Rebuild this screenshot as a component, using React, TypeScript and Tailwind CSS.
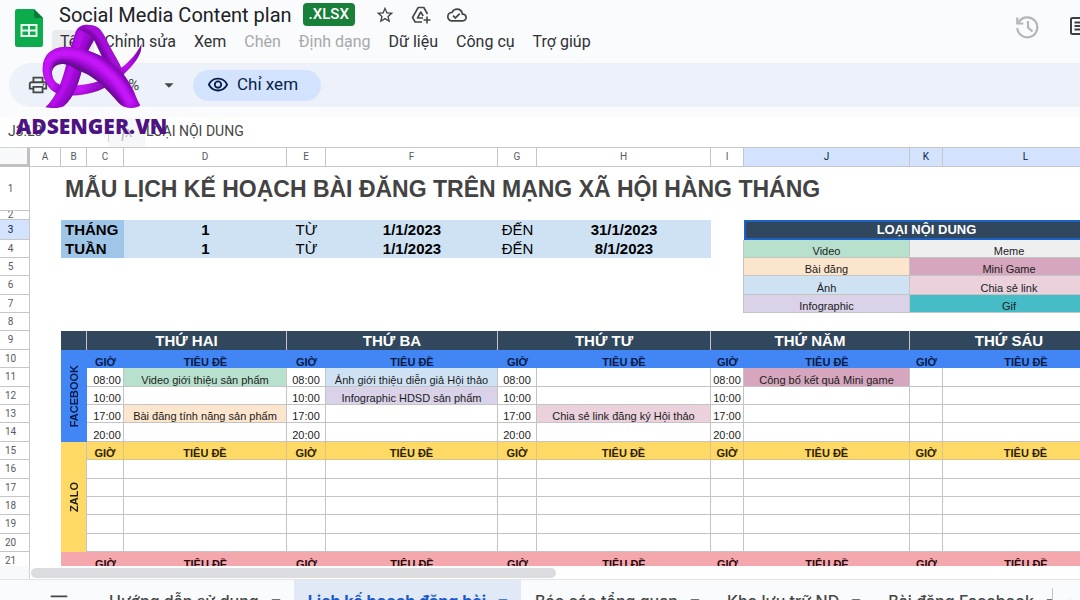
import React from "react";
import {
  MdArrowDropDown,
  MdChevronLeft,
  MdMenu,
  MdOutlineCloudDone,
  MdOutlinePrint,
  MdOutlineVisibility,
  MdStarBorder,
} from "react-icons/md";

const menus = [
  { label: "Tệp", open: true },
  { label: "Chỉnh sửa" },
  { label: "Xem" },
  { label: "Chèn", disabled: true },
  { label: "Định dạng", disabled: true },
  { label: "Dữ liệu" },
  { label: "Công cụ" },
  { label: "Trợ giúp" },
];

const columns = [
  { name: "A", width: "w-[31px]" },
  { name: "B", width: "w-[26px]" },
  { name: "C", width: "w-[37px]" },
  { name: "D", width: "w-[163px]" },
  { name: "E", width: "w-[39px]" },
  { name: "F", width: "w-[172px]" },
  { name: "G", width: "w-[39px]" },
  { name: "H", width: "w-[174px]" },
  { name: "I", width: "w-[33px]" },
  { name: "J", width: "w-[166px]", selected: true },
  { name: "K", width: "w-[33px]", selected: true },
  { name: "L", width: "w-[166px]", selected: true },
];

const days = ["THỨ HAI", "THỨ BA", "THỨ TƯ", "THỨ NĂM", "THỨ SÁU"];

type Post = { text: string; color: string };

const slots: { row: number; height: string; time: string; posts: (Post | null)[] }[] = [
  {
    row: 11,
    height: "h-[19px]",
    time: "08:00",
    posts: [
      { text: "Video giới thiệu sản phẩm", color: "bg-[#b7e1cd]" },
      { text: "Ảnh giới thiệu diễn giả Hội thảo", color: "bg-[#cfe2f3]" },
      null,
      { text: "Công bố kết quả Mini game", color: "bg-[#d5a6bd]" },
      null,
    ],
  },
  {
    row: 12,
    height: "h-[18px]",
    time: "10:00",
    posts: [null, { text: "Infographic HDSD sản phẩm", color: "bg-[#d9d2e9]" }, null, null, null],
  },
  {
    row: 13,
    height: "h-[18px]",
    time: "17:00",
    posts: [
      { text: "Bài đăng tính năng sản phẩm", color: "bg-[#fce5cd]" },
      null,
      { text: "Chia sẻ link đăng ký Hội thảo", color: "bg-[#ead1dc]" },
      null,
      null,
    ],
  },
  { row: 14, height: "h-[19px]", time: "20:00", posts: [null, null, null, null, null] },
];

const emptyRows = [
  { row: 16, height: "h-[19px]" },
  { row: 17, height: "h-[18px]" },
  { row: 18, height: "h-[18px]" },
  { row: 19, height: "h-[19px]" },
  { row: 20, height: "h-[18px]" },
];

const legend = [
  { row: 4, height: "h-[18px]", left: "Video", leftBg: "bg-[#b7e1cd]", right: "Meme", rightBg: "bg-[#efefef]" },
  { row: 5, height: "h-[18px]", left: "Bài đăng", leftBg: "bg-[#fce5cd]", right: "Mini Game", rightBg: "bg-[#d5a6bd]" },
  { row: 6, height: "h-[19px]", left: "Ảnh", leftBg: "bg-[#cfe2f3]", right: "Chia sẻ link", rightBg: "bg-[#ead1dc]" },
  { row: 7, height: "h-[18px]", left: "Infographic", leftBg: "bg-[#d9d2e9]", right: "Gif", rightBg: "bg-[#46bdc6]" },
];

const tabs = [
  { label: "Hướng dẫn sử dụng" },
  { label: "Lịch kế hoạch đăng bài", active: true },
  { label: "Báo cáo tổng quan" },
  { label: "Kho lưu trữ ND" },
  { label: "Bài đăng Facebook" },
];

const cell = "border-r border-b border-[#c4c4c4] p-0 text-center align-bottom";

function RowHead({ n, height, selected }: { n: number; height: string; selected?: boolean }) {
  return (
    <th
      scope="row"
      className={`${height} overflow-hidden border-r border-b border-[#c4c7c5] p-0 pr-2 text-center align-middle font-[Roboto,sans-serif] text-[10px] leading-[8px] font-normal ${
        selected ? "bg-[#d3e3fd] text-[#041e49]" : "bg-white text-[#575b5f]"
      }`}
    >
      {n}
    </th>
  );
}

function TitleCells({ tone }: { tone: string }) {
  return (
    <>
      {days.map((day) => (
        <React.Fragment key={day}>
          <td className={`p-0 text-center align-bottom font-bold ${tone}`}>GIỜ</td>
          <td className={`p-0 text-center align-bottom font-bold ${tone}`}>TIÊU ĐỀ</td>
        </React.Fragment>
      ))}
    </>
  );
}

function LegendCells({ item }: { item: (typeof legend)[number] }) {
  return (
    <>
      <td className={`${cell} ${item.leftBg}`}>{item.left}</td>
      <td colSpan={2} className={`${cell} ${item.rightBg}`}>
        {item.right}
      </td>
    </>
  );
}

function PlatformLabel({ children }: { children: string }) {
  return (
    <div className="flex justify-center">
      <span className="rotate-180 [writing-mode:vertical-rl]">{children}</span>
    </div>
  );
}

function SheetsLogo() {
  return (
    <svg viewBox="0 0 28 38" className="h-[38px] w-7 shrink-0" aria-label="Trang tính">
      <path d="M2.5 0H19l9 9v26.500a2.500 2.500 0 0 1-2.500 2.500h-23A2.500 2.500 0 0 1 0 35.500v-33A2.500 2.500 0 0 1 2.500 0Z" fill="#0cab4b" />
      <path d="M19 0l9 9h-6.500A2.500 2.500 0 0 1 19 6.500Z" fill="#087a36" />
      <path d="M5.500 15h17v13h-17Z M7.500 17v3.500h5.500V17Z M15 17v3.500h5.500V17Z M7.500 22.500V26h5.500v-3.500Z M15 22.500V26h5.500v-3.500Z" fill="#e8f7ee" fillRule="evenodd" />
    </svg>
  );
}

const tailShape =
  "M30 175C48 196 78 200 112 196C150 194 178 190 200 176C232 158 252 148 270 132C292 112 306 94 316 72C318 98 306 122 262 164C236 188 206 206 172 217C136 228 96 230 66 220C46 212 34 196 30 175Z";
const legShape =
  "M28 262C62 230 80 180 92 128C102 92 110 62 118 38C124 20 138 13 156 14C176 18 184 40 174 60C162 82 152 98 142 134C130 182 116 230 84 258C72 266 46 265 28 262Z";
const armShape =
  "M124 28C138 12 170 10 188 24C202 38 212 60 224 84C240 114 254 132 264 166L220 160C204 122 188 88 173 58C164 46 148 34 124 28Z";
const bandShape =
  "M66 222C34 210 18 172 20 142C22 106 44 82 88 80C134 80 186 98 226 126C260 152 282 188 296 220C302 236 308 248 313 256C302 266 272 268 256 256C232 232 212 206 190 188C166 168 144 156 124 150C108 140 96 133 82 132C60 130 46 144 48 162C50 182 62 192 80 197Z";

function Watermark() {
  return (
    <div className="pointer-events-none absolute top-5 left-4 flex flex-col items-start">
      <svg viewBox="0 0 336 276" className="ml-5 h-[92px] w-[112px]" aria-hidden="true">
        <defs>
          <filter id="soft" x="-20%" y="-20%" width="140%" height="140%">
            <feGaussianBlur stdDeviation="6" />
          </filter>
          <clipPath id="clipTail"><path d={tailShape} /></clipPath>
          <clipPath id="clipLeg"><path d={legShape} /></clipPath>
          <clipPath id="clipArm"><path d={armShape} /></clipPath>
          <clipPath id="clipBand"><path d={bandShape} /></clipPath>
          <linearGradient id="tail" gradientUnits="userSpaceOnUse" x1="30" y1="210" x2="316" y2="80">
            <stop offset="0" stopColor="#a80bdc" />
            <stop offset="0.3" stopColor="#c814fa" />
            <stop offset="0.6" stopColor="#7d09ad" />
            <stop offset="0.8" stopColor="#c40df5" />
            <stop offset="1" stopColor="#8209b5" />
          </linearGradient>
        </defs>
        <path d={tailShape} fill="url(#tail)" />
        <g clipPath="url(#clipTail)">
          <path d="M60 230C120 242 200 218 262 172C292 146 312 122 320 78" fill="none" stroke="#6a0894" strokeWidth="8" filter="url(#soft)" />
        </g>
        <path d={legShape} fill="#9a0ad0" />
        <g clipPath="url(#clipLeg)">
          <path d="M92 262C128 230 142 176 150 134C158 100 168 80 176 56" fill="none" stroke="#5c0786" strokeWidth="20" filter="url(#soft)" />
          <path d="M44 256C82 218 100 166 112 120C120 88 128 58 138 34" fill="none" stroke="#bd10f0" strokeWidth="20" filter="url(#soft)" />
        </g>
        <path d={armShape} fill="#8e0ac2" />
        <g clipPath="url(#clipArm)">
          <path d="M140 34C160 40 174 62 186 88C200 114 216 138 228 164" fill="none" stroke="#5f0788" strokeWidth="14" filter="url(#soft)" />
          <path d="M150 18C182 20 196 48 212 80C228 110 246 136 254 164" fill="none" stroke="#ad0be0" strokeWidth="18" filter="url(#soft)" />
        </g>
        <path d={bandShape} fill="#9c0bd2" />
        <g clipPath="url(#clipBand)">
          <path d="M50 166C42 140 60 126 92 134C144 148 196 188 254 260" fill="none" stroke="#57077e" strokeWidth="20" filter="url(#soft)" />
          <path d="M56 206C26 176 26 128 48 110C82 86 148 104 192 138C240 172 268 216 288 258" fill="none" stroke="#c814fa" strokeWidth="26" filter="url(#soft)" />
          <path d="M150 84C214 104 266 152 300 216" fill="none" stroke="#6e0998" strokeWidth="12" filter="url(#soft)" />
        </g>
      </svg>
      <span className="mt-px font-['Open_Sans',sans-serif] text-[21px] leading-[26px] font-extrabold text-[#4d1383]">ADSENGER.VN</span>
    </div>
  );
}

export default function App() {
  return (
    <div className="relative h-screen overflow-hidden bg-[#f9fbfd] font-[Roboto,sans-serif] text-[#202124]">
      <div className="flex h-[calc(100%+21px)] flex-col">
        <header className="flex h-[63px] shrink-0 items-start justify-between pl-[15px]">
          <div className="flex items-start gap-2 pt-[9px]">
            <SheetsLogo />
            <div className="-mt-2 flex flex-col">
              <div className="flex h-[27px] items-center pl-2">
                <h1 className="text-[20px] leading-6 font-normal whitespace-nowrap">Social Media Content plan</h1>
                <span className="ml-[11px] rounded bg-[#188038] px-[6px] text-[15px] leading-[23px] font-medium text-white">.XLSX</span>
                <div className="ml-5 flex gap-4 text-[20px] text-[#444746]">
                  <button aria-label="Gắn dấu sao"><MdStarBorder /></button>
                  <button aria-label="Thêm vào Drive">
                    <svg viewBox="0 0 20 20" className="size-5" fill="none" stroke="currentColor" strokeWidth="1.600">
                      <path d="M11 17H4.200L1.500 12.500 7.200 2.500h5.600l3.700 6.500" strokeLinejoin="round" />
                      <path d="M12 13H6.500L9.800 7l2.400 4" strokeLinejoin="round" />
                      <path d="M16 11.500v7M12.500 15h7" />
                    </svg>
                  </button>
                  <button aria-label="Trạng thái tài liệu"><MdOutlineCloudDone /></button>
                </div>
              </div>
              <nav className="flex gap-0.5 pt-0.5 pl-px">
                {menus.map((m) => (
                  <button
                    key={m.label}
                    disabled={m.disabled}
                    className={`h-6 rounded px-2 text-[16px] leading-6 whitespace-nowrap ${m.open ? "bg-[#e9ebee]" : ""} ${
                      m.disabled ? "text-[#a6a8ab]" : "text-[#303134]"
                    }`}
                  >
                    {m.label}
                  </button>
                ))}
              </nav>
            </div>
          </div>
          <div className="flex shrink-0 gap-[30px] overflow-hidden pt-[14px]">
            <button aria-label="Nhật ký phiên bản">
              <svg viewBox="0 0 26 26" className="size-[26px]" fill="none" stroke="#b4b6b8" strokeWidth="2.200">
                <path d="M4.500 8.500A10 10 0 1 1 3.300 14" />
                <path d="M3.300 3.500v6h6M14 7v6.500l4.500 4" />
              </svg>
            </button>
            <button aria-label="Nhận xét" className="-mr-3">
              <svg viewBox="0 0 22 26" className="h-[26px] w-[22px]" fill="none" stroke="#3c4043" strokeWidth="2">
                <rect x="1" y="4" width="20" height="16" rx="1.500" />
                <path d="M4.500 8.500h13M4.500 12h13M4.500 15.500h13" />
              </svg>
            </button>
          </div>
        </header>

        <div className="ml-[9px] flex h-11 shrink-0 items-center rounded-l-full bg-[#edf2fa] pl-[18px]">
          <button aria-label="In" className="text-[22px] text-[#444746]"><MdOutlinePrint /></button>
          <button className="ml-[54px] flex w-[77px] items-center justify-between text-[15px] text-[#444746]">
            100% <MdArrowDropDown className="text-[22px]" />
          </button>
          <button className="ml-[13px] flex h-[31px] items-center gap-2 rounded-full bg-[#d3e3fd] pr-[23px] pl-[14px] text-[17px] text-[#041e49]">
            <MdOutlineVisibility className="text-[22px]" />
            Chỉ xem
          </button>
        </div>

        <div className="mt-2.5 flex h-[30px] shrink-0 items-center bg-white text-[14px] text-[#444746]">
          <input aria-label="Hộp tên" defaultValue="J3:L3" className="h-7 w-[84px] bg-transparent pb-0.5 pl-2" />
          <MdArrowDropDown className="text-[18px]" />
          <span className="ml-[6px] h-5 w-px bg-[#d0d3d6]" />
          <label htmlFor="formula" className="flex h-full w-9 items-center justify-center bg-[#f6f7f8] font-['Liberation_Serif',serif] text-[16px] text-[#b4b6b8] italic">
            fx
          </label>
          <input id="formula" defaultValue="LOẠI NỘI DUNG" className="h-7 min-w-0 flex-1 bg-transparent pb-0.5 pl-px" />
        </div>

        <main className="min-h-0 flex-1 overflow-hidden bg-white">
          <table className="w-full table-fixed border-separate border-spacing-0 font-['Liberation_Sans',Arial,sans-serif] text-[11px] leading-3 whitespace-nowrap text-[#1c1c1c]">
            <colgroup>
              <col className="w-[30px]" />
              {columns.map((c) => (
                <col key={c.name} className={c.width} />
              ))}
            </colgroup>
            <thead>
              <tr>
                <th className="h-5 border-t border-r-3 border-b-3 border-t-[#d0d3d6] border-r-[#c0c0c0] border-b-[#c0c0c0] bg-[#f8f9fa] p-0" />
                {columns.map((c) => (
                  <th
                    key={c.name}
                    scope="col"
                    className={`h-5 border-t border-r border-b border-[#c4c7c5] p-0 text-center align-middle font-[Roboto,sans-serif] text-[10px] font-normal ${
                      c.selected ? "bg-[#d3e3fd] text-[#041e49]" : "bg-white text-[#575b5f]"
                    }`}
                  >
                    {c.name}
                  </th>
                ))}
              </tr>
            </thead>
            <tbody>
              <tr>
                <RowHead n={1} height="h-11" />
                <td />
                <td colSpan={11} className="p-0 pl-1 text-left align-middle text-[23px] leading-7 font-bold text-[#434343]">
                  MẪU LỊCH KẾ HOẠCH BÀI ĐĂNG TRÊN MẠNG XÃ HỘI HÀNG THÁNG
                </td>
              </tr>
              <tr>
                <RowHead n={2} height="h-[9px]" />
                <td colSpan={12} className="p-0" />
              </tr>
              <tr className="text-[15px] leading-[18px] text-black">
                <RowHead n={3} height="h-5" selected />
                <td />
                <td colSpan={2} className="bg-[#9fc5e8] p-0 pl-1 text-left font-bold">THÁNG</td>
                <td className="bg-[#cfe2f3] p-0 text-center font-bold">1</td>
                <td className="bg-[#cfe2f3] p-0 text-center">TỪ</td>
                <td className="bg-[#cfe2f3] p-0 text-center font-bold">1/1/2023</td>
                <td className="bg-[#cfe2f3] p-0 text-center">ĐẾN</td>
                <td className="bg-[#cfe2f3] p-0 text-center font-bold">31/1/2023</td>
                <td />
                <td colSpan={3} className="border-2 border-[#1a62c9] bg-[#30475e] p-0 text-center text-[13px] leading-4 font-bold text-white">
                  LOẠI NỘI DUNG
                </td>
              </tr>
              {legend.map((item, i) => (
                <tr key={item.row}>
                  <RowHead n={item.row} height={item.height} />
                  <td className="p-0" />
                  {i === 0 ? (
                    <>
                      <td colSpan={2} className="bg-[#9fc5e8] p-0 pl-1 text-left text-[15px] leading-[18px] font-bold text-black">TUẦN</td>
                      <td className="bg-[#cfe2f3] p-0 text-center text-[15px] leading-[18px] font-bold text-black">1</td>
                      <td className="bg-[#cfe2f3] p-0 text-center text-[15px] leading-[18px] text-black">TỪ</td>
                      <td className="bg-[#cfe2f3] p-0 text-center text-[15px] leading-[18px] font-bold text-black">1/1/2023</td>
                      <td className="bg-[#cfe2f3] p-0 text-center text-[15px] leading-[18px] text-black">ĐẾN</td>
                      <td className="bg-[#cfe2f3] p-0 text-center text-[15px] leading-[18px] font-bold text-black">8/1/2023</td>
                      <td className="border-r border-[#c4c4c4] p-0" />
                    </>
                  ) : (
                    <td colSpan={8} className="border-r border-[#c4c4c4] p-0" />
                  )}
                  <LegendCells item={item} />
                </tr>
              ))}
              <tr>
                <RowHead n={8} height="h-[18px]" />
                <td colSpan={12} className="p-0" />
              </tr>
              <tr className="text-[15px] leading-[18px] text-white">
                <RowHead n={9} height="h-[19px]" />
                <td className="p-0" />
                <td className="border-r border-[#c4c4c4] bg-[#30475e] p-0" />
                {days.map((day) => (
                  <th key={day} colSpan={2} className="border-r border-[#c4c4c4] bg-[#30475e] p-0 text-center font-bold">
                    {day}
                  </th>
                ))}
              </tr>
              <tr>
                <RowHead n={10} height="h-[18px]" />
                <td className="p-0" />
                <td rowSpan={5} className="bg-[#4285f4] p-0 font-bold text-[#061b45]">
                  <PlatformLabel>FACEBOOK</PlatformLabel>
                </td>
                <TitleCells tone="bg-[#4285f4] text-[#061b45]" />
              </tr>
              {slots.map((s) => (
                <tr key={s.row}>
                  <RowHead n={s.row} height={s.height} />
                  <td className="p-0" />
                  {s.posts.map((p, d) => (
                    <React.Fragment key={d}>
                      <td className={d === 0 ? `${cell} pl-1` : cell}>{d < 4 ? s.time : ""}</td>
                      <td className={`${cell} ${p ? p.color : ""}`}>{p?.text}</td>
                    </React.Fragment>
                  ))}
                </tr>
              ))}
              <tr>
                <RowHead n={15} height="h-[18px]" />
                <td className="p-0" />
                <td rowSpan={6} className="border-r border-[#c4c4c4] bg-[#ffd966] p-0 font-bold">
                  <PlatformLabel>ZALO</PlatformLabel>
                </td>
                <TitleCells tone="bg-[#ffd966] text-[#2b2200] border-r border-b border-[#d9c48a]" />
              </tr>
              {emptyRows.map((r) => (
                <tr key={r.row}>
                  <RowHead n={r.row} height={r.height} />
                  <td className="p-0" />
                  {days.map((day) => (
                    <React.Fragment key={day}>
                      <td className={cell} />
                      <td className={cell} />
                    </React.Fragment>
                  ))}
                </tr>
              ))}
              <tr>
                <RowHead n={21} height="h-[18px]" />
                <td className="p-0" />
                <td className="bg-[#f4a7ad] p-0" />
                <TitleCells tone="bg-[#f4a7ad] text-[#2b0a0d]" />
              </tr>
            </tbody>
          </table>
        </main>

        <div className="flex h-[13px] shrink-0 bg-white">
          <div className="w-[30px] border-r border-[#d0d3d6] bg-[#f8f9fa]" />
          <div className="flex flex-1 items-center pl-px">
            <div className="h-[10px] w-1/2 rounded-full bg-[#dadce0]" />
          </div>
        </div>

        <footer className="flex h-[42px] shrink-0 items-stretch border-t border-[#e1e3e6] font-[Inter,sans-serif] text-[16px] font-medium text-[#444746]">
          <button aria-label="Tất cả trang tính" className="flex w-[95px] shrink-0 items-center pl-[48px] text-[22px]">
            <MdMenu />
          </button>
          <div className="flex min-w-0 flex-1 overflow-hidden">
            {tabs.map((t) => (
              <button
                key={t.label}
                className={`flex shrink-0 items-center gap-1.5 pr-[7px] pl-[14px] whitespace-nowrap ${
                  t.active ? "bg-[#e1e9f7] font-bold text-[#1a5acb]" : ""
                }`}
              >
                {t.label}
                <MdArrowDropDown className="text-[22px]" />
              </button>
            ))}
          </div>
          <div className="flex w-7 shrink-0 items-center justify-end pt-2">
            <span className="mr-auto h-full w-px bg-[#c4c7c5]" />
            <button aria-label="Cuộn sang trái" className="text-[22px] text-[#a6a8ab]">
              <MdChevronLeft />
            </button>
          </div>
        </footer>
      </div>
      <Watermark />
    </div>
  );
}
